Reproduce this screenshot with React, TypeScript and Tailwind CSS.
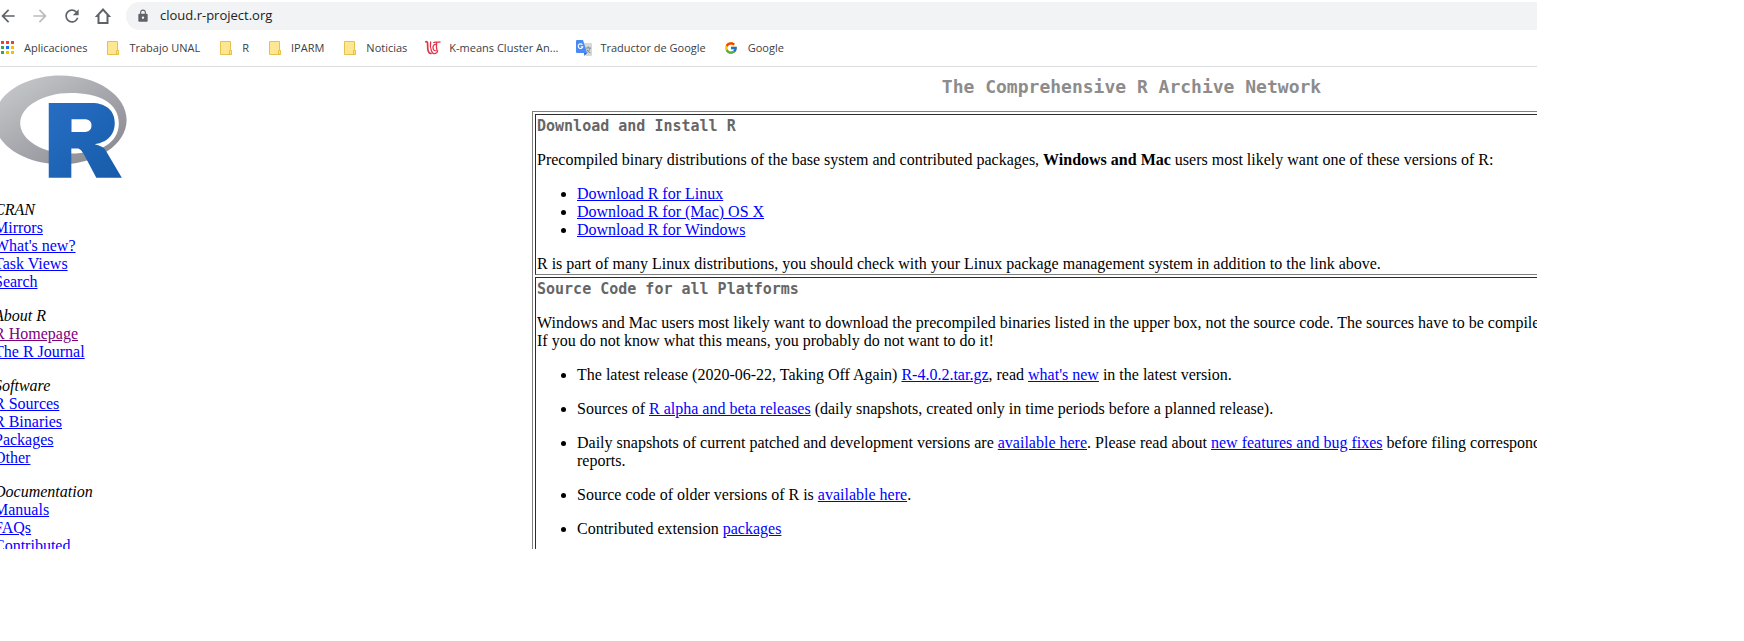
import type { ReactNode } from "react";
import { MdArrowBack, MdArrowForward, MdLock, MdRefresh } from "react-icons/md";
import { FcGoogle } from "react-icons/fc";

function HomeIcon() {
  return (
    <svg viewBox="0 0 18 18" className="size-[18px]" fill="#5f6368" fillRule="evenodd" aria-hidden="true">
      <path d="M9 1 .8 10H3.500v7h11v-7h2.700ZM9 3.900 5.500 7.800V15h7V7.800Z" />
    </svg>
  );
}

function AppsIcon() {
  const colors = ["#ea4335", "#ea4335", "#ea4335", "#34a853", "#1a73e8", "#fbbc05", "#34a853", "#fbbc05", "#fbbc05"];
  return (
    <svg viewBox="0 0 16 16" className="size-4" aria-hidden="true">
      {colors.map((color, i) => (
        <rect key={i} x={1 + (i % 3) * 5} y={1 + Math.floor(i / 3) * 5} width="3" height="3" fill={color} />
      ))}
    </svg>
  );
}

function FolderIcon() {
  return (
    <svg viewBox="0 0 16 16" className="size-4" fill="#ffe693" stroke="#e8c04a" aria-hidden="true">
      <path d="M2.500 1.500h10v9h1v4h-11z" />
      <path d="M11.500 10.500h2v3.500h-2z" />
    </svg>
  );
}

function ClusterIcon() {
  return (
    <svg viewBox="0 0 16 16" className="size-4" fill="none" stroke="#e0344a" aria-hidden="true">
      <path d="M.3 2.200C1.500 1.300 2.600 1.600 2.600 3c0 3-.2 6 .8 8.500.6 1.500 1.800 2.300 3.300 1.800" strokeWidth="1.700" />
      <path d="M5.700 1.500c-.6 3-.3 7 .8 9.500.6 1.600 1.800 2.800 3.300 2.600 1.700-.2 2.700-1.500 3-3.200" strokeWidth="1.300" />
      <path d="M11 4.500C8.800 4.200 7.900 5.800 8 7.800s1.200 3.200 2.800 2.800" strokeWidth="1.300" />
      <path d="M8.300 2.800c2-1.700 4.200.2 7.200-1M11.700 2.500c-.4 3-.4 6 .3 8.500" strokeWidth="1.300" />
    </svg>
  );
}

function TranslateIcon() {
  return (
    <svg viewBox="0 0 16 16" className="size-4" aria-hidden="true">
      <path d="M7 3h8a1 1 0 0 1 1 1v11a1 1 0 0 1-1 1H10z" fill="#d8d8d8" />
      <path d="M9.500 8h5.500M12.200 6.500V8M14 8c-.5 2.500-2 4-3.500 5M10.800 9.500c.8 1.500 2 2.800 3.700 3.500" fill="none" stroke="#7b8a92" />
      <path d="M8 13h3l-2.500 3z" fill="#3060c8" />
      <path d="M1 0h6l4 13H1a1 1 0 0 1-1-1V1a1 1 0 0 1 1-1Z" fill="#4a8af4" />
      <path d="M6.400 4.800A2.300 2.300 0 1 0 6.800 6.700H4.700" fill="none" stroke="#fff" strokeWidth="1.100" />
    </svg>
  );
}

function RLogo() {
  return (
    <svg viewBox="0 0 724 561" className="block h-[103px] w-[133px]" role="img" aria-label="R">
      <defs>
        <linearGradient id="ring" x1="0" x2="1" y1="0" y2="1">
          <stop offset="0" stopColor="#cbced0" />
          <stop offset="1" stopColor="#84838b" />
        </linearGradient>
        <linearGradient id="blue" x1="0" x2="1" y1="0" y2="1">
          <stop offset="0" stopColor="#276dc3" />
          <stop offset="1" stopColor="#165caa" />
        </linearGradient>
      </defs>
      <path
        fill="url(#ring)"
        fillRule="evenodd"
        d="M361.453,485.937C162.329,485.937,0.906,377.828,0.906,244.469C0.906,111.109,162.329,3,361.453,3C560.578,3,722,111.109,722,244.469C722,377.828,560.578,485.937,361.453,485.937ZM416.641,97.406C265.289,97.406,142.594,171.314,142.594,262.484C142.594,353.654,265.289,427.562,416.641,427.562C567.992,427.562,679.687,377.033,679.687,262.484C679.687,147.971,567.992,97.406,416.641,97.406Z"
      />
      <path
        fill="url(#blue)"
        fillRule="evenodd"
        d="M550,377C550,377,571.822,383.585,584.5,390C588.899,392.226,596.51,396.668,602,402.5C607.378,408.212,610,414,610,414L696,559L557,559.062L492,437C492,437,478.69,414.131,470.5,407.5C463.668,401.969,460.755,400,454,400C449.298,400,420.974,400,420.974,400L421,558.974L298,559.026L298,152.938L545,152.938C545,152.938,657.5,154.967,657.5,262C657.5,369.033,550,377,550,377ZM496.5,241.024L422.037,240.976L422,310.026L496.5,310.002C496.5,310.002,531,309.895,531,274.877C531,239.155,496.5,241.024,496.5,241.024Z"
      />
    </svg>
  );
}

const bookmarks: { label: string; icon: ReactNode }[] = [
  { label: "Aplicaciones", icon: <AppsIcon /> },
  { label: "Trabajo UNAL", icon: <FolderIcon /> },
  { label: "R", icon: <FolderIcon /> },
  { label: "IPARM", icon: <FolderIcon /> },
  { label: "Noticias", icon: <FolderIcon /> },
  { label: "K-means Cluster An...", icon: <ClusterIcon /> },
  { label: "Traductor de Google", icon: <TranslateIcon /> },
  { label: "Google", icon: <FcGoogle className="size-[14px]" aria-hidden="true" /> },
];

const menu = [
  { title: "CRAN", links: ["Mirrors", "What's new?", "Task Views", "Search"] },
  { title: "About R", links: ["R Homepage", "The R Journal"] },
  { title: "Software", links: ["R Sources", "R Binaries", "Packages", "Other"] },
  { title: "Documentation", links: ["Manuals", "FAQs", "Contributed"] },
];

function Link({ children, visited = false }: { children: ReactNode; visited?: boolean }) {
  return (
    <a href="#" className={visited ? "text-[#800080] underline" : "text-[#0000ff] underline"}>
      {children}
    </a>
  );
}

function Box({ title, children }: { title: string; children: ReactNode }) {
  return (
    <section className="flex flex-col gap-4 border border-t-[#2c2c2c] border-r-[#808080] border-b-[#808080] border-l-[#2c2c2c] p-px">
      <h2 className="pt-0.5 font-['DejaVu_Sans_Mono',monospace] text-[15px] leading-[17px] font-bold text-[#666666]">
        {title}
      </h2>
      {children}
    </section>
  );
}

export default function App() {
  return (
    <div className="h-screen bg-white pr-[207px] pb-[92px]">
      <div className="flex h-full flex-col overflow-hidden">
        <header className="shrink-0 border-b border-[#dadce0] pt-0.5 font-['Open_Sans',sans-serif]">
          <div className="flex h-7 items-center">
            <div className="flex w-[126px] shrink-0 items-center gap-3 text-[#5f6368]">
              <button type="button" aria-label="Back" className="-ml-0.5">
                <MdArrowBack className="size-5" />
              </button>
              <button type="button" aria-label="Forward" className="text-[#babcbe]">
                <MdArrowForward className="size-5" />
              </button>
              <button type="button" aria-label="Reload">
                <MdRefresh className="size-5" />
              </button>
              <button type="button" aria-label="Home">
                <HomeIcon />
              </button>
            </div>
            <label className="flex h-7 flex-1 items-center gap-2.5 rounded-l-full bg-[#f1f3f4] pl-2.5">
              <MdLock className="size-[14px] text-[#5f6368]" aria-label="Secure address" />
              <input
                type="text"
                defaultValue="cloud.r-project.org"
                className="flex-1 bg-transparent text-[13px] text-[#202124] outline-none"
              />
            </label>
          </div>
          <nav className="flex h-9 items-center gap-[18px]">
            {bookmarks.map(({ label, icon }) => (
              <a key={label} href="#" className="flex items-center gap-2 text-[11px] whitespace-nowrap text-[#3c4043]">
                <span className="flex w-4">{icon}</span>
                {label}
              </a>
            ))}
          </nav>
        </header>

        <div className="flex min-h-0 flex-1 font-['Liberation_Serif',serif] text-[16px] leading-[18px] text-black">
          <aside className="w-[532px] shrink-0 pt-2">
            <div className="-ml-1.5 flex flex-col">
              <RLogo />
              <nav className="mt-[23px] flex flex-col gap-4">
                {menu.map(({ title, links }) => (
                  <div key={title}>
                    <em>{title}</em>
                    <ul>
                      {links.map((label) => (
                        <li key={label}>
                          <Link visited={label === "R Homepage"}>{label}</Link>
                        </li>
                      ))}
                    </ul>
                  </div>
                ))}
              </nav>
            </div>
          </aside>

          <main className="-mr-[194px] min-w-0 flex-1">
            <h1 className="h-11 pt-2.5 text-center font-['DejaVu_Sans_Mono',monospace] text-[18px] leading-5 font-bold text-[#8c8c8c]">
              The Comprehensive R Archive Network
            </h1>
            <div className="flex flex-col gap-0.5 border border-[#808080] p-0.5">
              <Box title="Download and Install R">
                <p>
                  Precompiled binary distributions of the base system and contributed packages,{" "}
                  <strong>Windows and Mac</strong> users most likely want one of these versions of R:
                </p>
                <ul className="list-disc pl-10">
                  <li><Link>Download R for Linux</Link></li>
                  <li><Link>Download R for (Mac) OS X</Link></li>
                  <li><Link>Download R for Windows</Link></li>
                </ul>
                <p>
                  R is part of many Linux distributions, you should check with your Linux package management system in
                  addition to the link above.
                </p>
              </Box>
              <Box title="Source Code for all Platforms">
                <p>
                  Windows and Mac users most likely want to download the precompiled binaries listed in the upper box,
                  not the source code. The sources have to be compiled before you can use them. If you do not know what
                  this means, you probably do not want to do it!
                </p>
                <ul className="flex list-disc flex-col gap-4 pb-8 pl-10">
                  <li>
                    The latest release (2020-06-22, Taking Off Again) <Link>R-4.0.2.tar.gz</Link>, read{" "}
                    <Link>what's new</Link> in the latest version.
                  </li>
                  <li>
                    Sources of <Link>R alpha and beta releases</Link> (daily snapshots, created only in time periods
                    before a planned release).
                  </li>
                  <li>
                    Daily snapshots of current patched and development versions are <Link>available here</Link>. Please
                    read about <Link>new features and bug fixes</Link> before filing corresponding feature requests or
                    bug reports.
                  </li>
                  <li>
                    Source code of older versions of R is <Link>available here</Link>.
                  </li>
                  <li>
                    Contributed extension <Link>packages</Link>
                  </li>
                </ul>
              </Box>
            </div>
          </main>
        </div>
      </div>
    </div>
  );
}
